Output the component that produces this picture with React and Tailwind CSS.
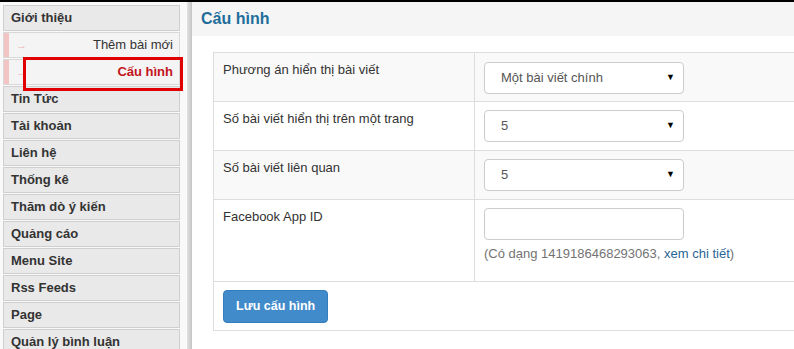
import React from "react";

const menu = [
  "Tin Tức",
  "Tài khoản",
  "Liên hệ",
  "Thống kê",
  "Thăm dò ý kiến",
  "Quảng cáo",
  "Menu Site",
  "Rss Feeds",
  "Page",
  "Quản lý bình luận",
];

const MenuItem = ({ label }) => (
  <div className="h-[26px] mb-px border border-[#cfcfcf] bg-[#e9e9e9] pl-[7px] flex items-center text-[13px] font-bold text-[#333]">
    {label}
  </div>
);

const SubItem = ({ label, active }) => (
  <div className="h-[26px] mb-px border border-[#d8d8d8] bg-[#f4f4f4] flex items-center">
    <div className="w-[5px] h-full bg-[#f3c4c4]" />
    <span className="ml-[7px] text-[11px] text-[#f0b0b0]">→</span>
    <span
      className={
        "ml-auto pr-[6px] text-[13px] " +
        (active ? "font-bold text-[#c3161c]" : "text-[#333]")
      }
    >
      {label}
    </span>
  </div>
);

const Select = ({ value }) => (
  <div className="w-[200px] h-[32px] border border-[#cccccc] rounded-[4px] bg-white flex items-center pl-[16px] pr-[8px] text-[13px] text-[#555]">
    <span>{value}</span>
    <span className="ml-auto text-[9px] text-black">▼</span>
  </div>
);

export default function App() {
  return (
    <div className="h-[349px] overflow-hidden border-t-2 border-black flex font-['Liberation_Sans',Arial,sans-serif] bg-white">
      {/* sidebar */}
      <aside className="w-[187px] shrink-0 pl-[3px] pt-[3px] pr-[7px] bg-[#f9f9f9] relative">
        <MenuItem label="Giới thiệu" />
        <SubItem label="Thêm bài mới" />
        <SubItem label="Cấu hình" active />
        {menu.map((m) => (
          <MenuItem key={m} label={m} />
        ))}
        <div className="absolute left-[23px] top-[55px] w-[160px] h-[34px] border-[3px] border-[#e10000]" />
      </aside>
      <div className="w-[5px] shrink-0 bg-gradient-to-r from-[#e2e2e2] to-[#c4c4c4]" />

      {/* main */}
      <main className="flex-1 min-w-0">
        <div className="h-[34px] bg-[#f5f5f5] pl-[9px] flex items-center">
          <h1 className="text-[16px] font-bold text-[#1f6d9b]">Cấu hình</h1>
        </div>
        <div className="pt-[16px] pl-[21px]">
          <div className="w-[640px] border-t border-l border-[#dddddd] text-[13px] text-[#333]">
            <div className="flex h-[49px] bg-[#f9f9f9] border-b border-[#dddddd]">
              <div className="w-[261px] border-r border-[#dddddd] pl-[9px] pt-[7px]">
                Phương án hiển thị bài viết
              </div>
              <div className="pl-[9px] pt-[9px]">
                <Select value="Một bài viết chính" />
              </div>
            </div>
            <div className="flex h-[49px] border-b border-[#dddddd]">
              <div className="w-[261px] border-r border-[#dddddd] pl-[9px] pt-[7px]">
                Số bài viết hiển thị trên một trang
              </div>
              <div className="pl-[9px] pt-[8px]">
                <Select value="5" />
              </div>
            </div>
            <div className="flex h-[49px] bg-[#f9f9f9] border-b border-[#dddddd]">
              <div className="w-[261px] border-r border-[#dddddd] pl-[9px] pt-[7px]">
                Số bài viết liên quan
              </div>
              <div className="pl-[9px] pt-[8px]">
                <Select value="5" />
              </div>
            </div>
            <div className="flex h-[82px] border-b border-[#dddddd]">
              <div className="w-[261px] border-r border-[#dddddd] pl-[9px] pt-[7px]">
                Facebook App ID
              </div>
              <div className="pl-[9px] pt-[8px]">
                <div className="w-[200px] h-[32px] border border-[#cccccc] rounded-[4px] bg-white" />
                <div className="mt-[4px] text-[#737373]">
                  (Có dạng 1419186468293063,{" "}
                  <span className="text-[#2a6496]">xem chi tiết</span>)
                </div>
              </div>
            </div>
            <div className="h-[49px] border-b border-[#dddddd] pl-[9px] pt-[8px]">
              <button className="h-[33px] px-[12px] rounded-[4px] bg-[#428bca] border border-[#357ebd] text-white text-[12.5px] font-bold">
                Lưu cấu hình
              </button>
            </div>
          </div>
        </div>
      </main>
    </div>
  );
}
